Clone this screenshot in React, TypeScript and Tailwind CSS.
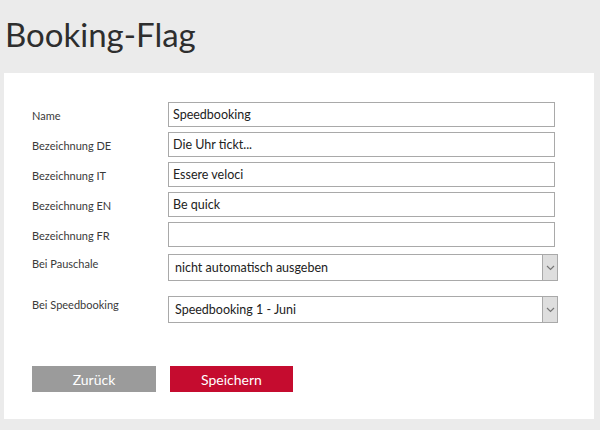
import React from 'react';

const font = { fontFamily: 'Lato, "Open Sans", sans-serif' };

const textFields = [
  { label: 'Name', value: 'Speedbooking' },
  { label: 'Bezeichnung DE', value: 'Die Uhr tickt...' },
  { label: 'Bezeichnung IT', value: 'Essere veloci' },
  { label: 'Bezeichnung EN', value: 'Be quick' },
  { label: 'Bezeichnung FR', value: '' },
];

function Chevron() {
  return (
    <svg width="9" height="6" viewBox="0 0 9 6" fill="none">
      <path d="M1 1l3.5 3.5L8 1" stroke="#777" strokeWidth="1.2" />
    </svg>
  );
}

function SelectBox({ value }: { value: string }) {
  return (
    <div className="flex h-[27px] w-[390px] border border-[#a9a9a9] bg-white">
      <div className="flex-1 flex items-center pl-[6px] pt-[2px] text-[12.5px] text-[#222]">{value}</div>
      <div className="w-[15px] flex items-center justify-center bg-[#dedede] border-l border-[#a9a9a9]">
        <Chevron />
      </div>
    </div>
  );
}

export default function App() {
  return (
    <div className="w-[600px] h-[430px] bg-[#ebebeb] overflow-hidden" style={font}>
      <h1 className="h-[73px] pl-[5px] pt-[12px] text-[33px] leading-[44px] text-[#2e2e2e]">Booking-Flag</h1>

      <div className="ml-[4px] mr-[6px] h-[346px] bg-white pl-[28px] pt-[29px]">
        <div className="flex flex-col gap-[5px]">
          {textFields.map((f) => (
            <div key={f.label} className="flex items-center h-[25px]">
              <div className="w-[136px] pt-[3px] text-[11px] text-[#3a3a3a]">{f.label}</div>
              <div className="w-[387px] h-[25px] border border-[#a9a9a9] flex items-center pl-[4px] pt-[2px] text-[12.5px] text-[#222]">
                {f.value}
              </div>
            </div>
          ))}
        </div>

        <div className="flex mt-[7px]">
          <div className="w-[136px] pt-[2px] text-[11px] text-[#3a3a3a]">Bei Pauschale</div>
          <SelectBox value="nicht automatisch ausgeben" />
        </div>

        <div className="flex mt-[15px]">
          <div className="w-[136px] pt-[1px] text-[11px] text-[#3a3a3a]">Bei Speedbooking</div>
          <SelectBox value="Speedbooking 1 - Juni" />
        </div>

        <div className="flex gap-[14px] mt-[43px]">
          <button className="w-[124px] h-[26px] bg-[#9b9b9b] text-white text-[14px]">Zurück</button>
          <button className="w-[123px] h-[26px] bg-[#c50c2f] text-white text-[14px]">Speichern</button>
        </div>
      </div>
    </div>
  );
}
